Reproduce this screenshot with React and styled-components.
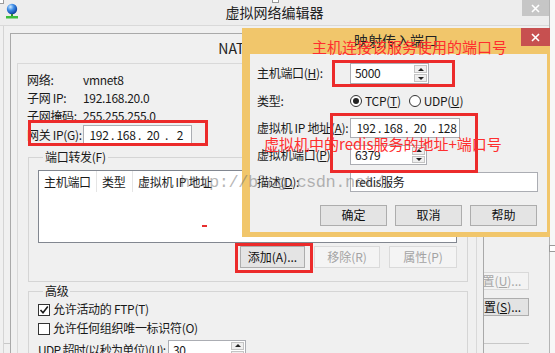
import React from 'react';
import styled, { createGlobalStyle } from 'styled-components';

const GlobalStyle = createGlobalStyle`
  html, body {
    margin: 0;
    padding: 0;
    background: #f7f7f7;
  }
  body {
    font-family: "Noto Sans CJK SC", "Liberation Sans", sans-serif;
    font-size: 12px;
    line-height: 1.2;
    color: #1a1a1a;
  }
`;

const Desktop = styled.div`
  position: relative;
  width: 555px;
  height: 353px;
  overflow: hidden;
  background: #f7f7f7;
  white-space: nowrap;
  letter-spacing: -0.3px;
`;

/* ---------- editor window (back) ---------- */

const EditorWindow = styled.div`
  position: absolute;
  left: 0;
  top: 0;
  width: 549px;
  height: 353px;
  display: flex;
  flex-direction: column;
  background: #f0f0f0;
  border-right: 1px solid #b4b4b4;
`;

const TitleBar = styled.div`
  flex: none;
  height: 25px;
  display: grid;
  grid-template-columns: 1fr auto 1fr;
  align-items: start;
  background: #ededed;
  border-bottom: 1px solid #d9d9d9;
`;

const AppIcon = styled.div`
  padding: 3px 0 0 5px;
  line-height: 0;
`;

const Caption = styled.div`
  font-size: 14px;
  line-height: 25px;
  letter-spacing: 0;
  color: #222;
`;

const CloseButton = styled.div`
  justify-self: end;
  width: ${(p) => p.$w}px;
  height: ${(p) => p.$h}px;
  display: flex;
  align-items: center;
  justify-content: center;
  background: ${(p) => (p.$red ? '#c75050' : '#c6c6c6')};
`;

const EditorBody = styled.div`
  flex: 1;
  display: flex;
  flex-direction: column;
  align-items: flex-end;
  gap: 8px;
  margin-left: 3px;
  padding: 246px 20px 0 0;
  border-left: 1px solid #d4d4d4;
`;

const SideButton = styled.button`
  width: 90px;
  height: 18px;
  padding: 0;
  font: inherit;
  line-height: 16px;
  color: ${(p) => (p.disabled ? '#a6a6a6' : '#111')};
  background: ${(p) => (p.disabled ? '#f3f3f3' : '#e3e3e3')};
  border: 1px solid ${(p) => (p.disabled ? '#d9d9d9' : '#adadad')};
`;

const SideRule = styled.div`
  width: 100%;
  height: 1px;
  margin-top: 19px;
  background: #c8c8c8;
`;

/* ---------- NAT dialog (middle) ---------- */

const NatDialog = styled.div`
  position: absolute;
  left: 10px;
  top: 33px;
  width: 474px;
  height: 340px;
  box-sizing: border-box;
  display: flex;
  flex-direction: column;
  padding: 0 6px;
  background: #f0f0f0;
  border: 1px solid #a9a9a9;
`;

const NatTitle = styled.div`
  height: 29px;
  line-height: 29px;
  text-align: center;
  font-size: 14px;
  letter-spacing: 0;
  color: #222;
`;

const NatBody = styled.div`
  flex: 1;
  border: 1px solid #d9d9d9;
  background: #f0f0f0;
`;

const InfoGrid = styled.div`
  display: grid;
  grid-template-columns: 56px auto;
  grid-template-rows: 18px 18px 18px 20px;
  align-items: center;
  padding: 7px 0 0 9px;
`;

const IpBox = styled.div`
  display: flex;
  align-items: center;
  width: ${(p) => p.$w}px;
  height: 20px;
  box-sizing: border-box;
  padding-left: 5px;
  background: #fff;
  border: 1px solid #abadb3;
`;

const Octet = styled.span`
  width: 20px;
  text-align: center;
`;

const IpDot = styled.span`
  width: 7px;
  text-align: center;
`;

const Group = styled.fieldset`
  min-width: 0;
  margin: ${(p) => p.$top}px 8px 0 10px;
  padding: ${(p) => p.$pad}px 10px ${(p) => p.$bottom}px 9px;
  border: 1px solid #d5d5d5;
`;

const Legend = styled.legend`
  margin-left: 5px;
  padding: 0 2px;
  line-height: 14px;
`;

const ListBox = styled.div`
  height: 73px;
  box-sizing: border-box;
  background: #fff;
  border: 1px solid #828790;
`;

const ListHeader = styled.div`
  display: flex;
  height: 21px;
`;

const HeaderCell = styled.div`
  width: ${(p) => p.$w}px;
  box-sizing: border-box;
  padding-left: 5px;
  line-height: 21px;
  border-right: 1px solid #e5e5e5;
`;

const ButtonRow = styled.div`
  display: flex;
  justify-content: flex-end;
  gap: ${(p) => p.$gap}px;
  margin-top: ${(p) => p.$top}px;
  padding-right: ${(p) => p.$right || 0}px;
`;

const Button = styled.button`
  width: ${(p) => p.$w}px;
  height: ${(p) => p.$h || 21}px;
  padding: 0;
  font: inherit;
  color: ${(p) => (p.disabled ? '#a3a3a3' : '#111')};
  background: ${(p) => (p.disabled ? '#f4f4f4' : '#e4e4e4')};
  border: 1px solid ${(p) => (p.disabled ? '#dadada' : '#adadad')};
`;

const CheckRow = styled.label`
  display: flex;
  align-items: center;
  gap: 3px;
  height: 19px;
`;

const CheckBox = styled.span`
  width: 12px;
  height: 12px;
  box-sizing: border-box;
  display: flex;
  align-items: center;
  justify-content: center;
  background: #fff;
  border: 1px solid #333;
`;

const FieldRow = styled.div`
  display: flex;
  align-items: center;
  margin-top: 2px;
`;

const FieldLabel = styled.span`
  flex: none;
  width: 130px;
  letter-spacing: -0.7px;
`;

/* ---------- port mapping dialog (front) ---------- */

const MapDialog = styled.div`
  position: absolute;
  left: 242px;
  top: 28px;
  width: 308px;
  height: 209px;
  box-sizing: border-box;
  display: flex;
  flex-direction: column;
  padding-bottom: 5px;
  background: #f1c66b;
`;

const MapTitleBar = styled.div`
  flex: none;
  height: 26px;
  display: grid;
  grid-template-columns: 1fr auto 1fr;
  align-items: start;
`;

const MapCaption = styled.div`
  font-size: 14px;
  line-height: 24px;
  letter-spacing: 0;
  color: #222;
`;

const MapContent = styled.div`
  flex: 1;
  margin: 0 3px 0 8px;
  background: #f0f0f0;
`;

const Form = styled.div`
  display: grid;
  grid-template-columns: 93px auto;
  grid-template-rows: 21px 20px 20px 20px 20px;
  row-gap: 7px;
  align-items: center;
  padding: 9px 10px 0 7px;
`;

const Key = styled.span`
  text-decoration: underline;
  text-underline-offset: 1px;
`;

const SpinBox = styled.div`
  display: flex;
  width: ${(p) => p.$w}px;
  height: ${(p) => p.$h}px;
  box-sizing: border-box;
  background: #fff;
  border: 1px solid #abadb3;
`;

const SpinText = styled.span`
  flex: 1;
  padding-left: 4px;
  align-self: center;
`;

const SpinArrows = styled.div`
  display: flex;
  flex-direction: column;
  gap: 1px;
  width: 13px;
  padding: 1px;
`;

const Arrow = styled.span`
  flex: 1;
  display: flex;
  align-items: center;
  justify-content: center;
  background: #efefef;
  border: 1px solid #c4c4c4;

  &::after {
    content: '';
    border-left: 3px solid transparent;
    border-right: 3px solid transparent;
    ${(p) => (p.$down ? 'border-top: 3px solid #222;' : 'border-bottom: 3px solid #222;')}
  }
`;

const RadioGroup = styled.div`
  display: flex;
  align-items: center;
  gap: 8px;
`;

const RadioItem = styled.label`
  display: flex;
  align-items: center;
  gap: 3px;
`;

const Radio = styled.span`
  width: 12px;
  height: 12px;
  box-sizing: border-box;
  border-radius: 50%;
  border: 1px solid #333;
  background: #fff;
  display: flex;
  align-items: center;
  justify-content: center;

  &::after {
    content: '';
    width: 6px;
    height: 6px;
    border-radius: 50%;
    background: ${(p) => (p.$on ? '#222' : 'transparent')};
  }
`;

const TextBox = styled.div`
  width: ${(p) => p.$w}px;
  height: 20px;
  box-sizing: border-box;
  padding-left: 4px;
  line-height: 18px;
  background: #fff;
  border: 1px solid #abadb3;
`;

/* ---------- annotations over the screenshot ---------- */

const RedBox = styled.div`
  position: absolute;
  left: ${(p) => p.$x}px;
  top: ${(p) => p.$y}px;
  width: ${(p) => p.$w}px;
  height: ${(p) => p.$h}px;
  box-sizing: border-box;
  border: 3px solid #ec2b2b;
`;

const RedNote = styled.div`
  position: absolute;
  left: ${(p) => p.$x}px;
  top: ${(p) => p.$y}px;
  font-size: 15px;
  line-height: 16px;
  letter-spacing: 0;
  color: #ff2e2e;
`;

const Watermark = styled.div`
  position: absolute;
  left: 180px;
  top: 173px;
  font-family: "Liberation Mono", monospace;
  font-size: 17px;
  letter-spacing: -0.5px;
  color: rgba(110, 110, 110, 0.5);
`;

const RedDash = styled.div`
  position: absolute;
  left: 202px;
  top: 225px;
  width: 5px;
  height: 2px;
  background: #e62e2e;
`;

const Handle = styled.div`
  position: absolute;
  left: ${(p) => p.$x}px;
  top: ${(p) => p.$y}px;
  width: 5px;
  height: 5px;
  background: #fff;
  border: 1px solid #9a9a9a;
`;

const GlobeIcon = () => (
  <svg width="14" height="16" viewBox="0 0 14 16">
    <defs>
      <radialGradient id="globe" cx="35%" cy="30%" r="75%">
        <stop offset="0" stopColor="#cfeaff" />
        <stop offset="0.45" stopColor="#3a8ae6" />
        <stop offset="1" stopColor="#0b3a98" />
      </radialGradient>
    </defs>
    <circle cx="7" cy="6" r="5.2" fill="url(#globe)" />
    <rect x="6" y="11" width="2" height="2" fill="#2f8f2f" />
    <rect x="1" y="13" width="12" height="2.5" fill="#3cbd3c" />
  </svg>
);

const CrossIcon = () => (
  <svg width="9" height="9" viewBox="0 0 9 9">
    <path d="M1 1 L8 8 M8 1 L1 8" stroke="#fff" strokeWidth="1.6" />
  </svg>
);

const TickIcon = () => (
  <svg width="10" height="10" viewBox="0 0 10 10">
    <path d="M1.5 5 L4 7.8 L8.8 1.5" stroke="#1a1a1a" strokeWidth="1.6" fill="none" />
  </svg>
);

const IpAddress = ({ parts, width }) => (
  <IpBox $w={width}>
    {parts.map((part, i) => (
      <React.Fragment key={i}>
        {i > 0 && <IpDot>.</IpDot>}
        <Octet>{part}</Octet>
      </React.Fragment>
    ))}
  </IpBox>
);

const Spinner = ({ value, width, height }) => (
  <SpinBox $w={width} $h={height}>
    <SpinText>{value}</SpinText>
    <SpinArrows>
      <Arrow />
      <Arrow $down />
    </SpinArrows>
  </SpinBox>
);

const App = () => (
  <>
    <GlobalStyle />
    <Desktop>
      <EditorWindow>
        <TitleBar>
          <AppIcon>
            <GlobeIcon />
          </AppIcon>
          <Caption>虚拟网络编辑器</Caption>
          <CloseButton $w={27} $h={16}>
            <CrossIcon />
          </CloseButton>
        </TitleBar>
        <EditorBody>
          <SideButton disabled>
            还原设置(<Key>U</Key>)...
          </SideButton>
          <SideButton>
            NAT 设置(<Key>S</Key>)...
          </SideButton>
          <SideRule />
        </EditorBody>
      </EditorWindow>

      <NatDialog>
        <NatTitle>NAT 设置</NatTitle>
        <NatBody>
          <InfoGrid>
            <span>网络:</span>
            <span>vmnet8</span>
            <span>子网 IP:</span>
            <span>192.168.20.0</span>
            <span>子网掩码:</span>
            <span>255.255.255.0</span>
            <span>网关 IP(G):</span>
            <IpAddress parts={['192', '168', '20', '2']} width={109} />
          </InfoGrid>

          <Group $top={5} $pad={6} $bottom={13}>
            <Legend>端口转发(F)</Legend>
            <ListBox>
              <ListHeader>
                <HeaderCell $w={58}>主机端口</HeaderCell>
                <HeaderCell $w={36}>类型</HeaderCell>
                <HeaderCell $w={112}>虚拟机 IP 地址</HeaderCell>
              </ListHeader>
            </ListBox>
            <ButtonRow $gap={9} $top={3}>
              <Button $w={65} $h={22}>添加(A)...</Button>
              <Button $w={66} $h={22} disabled>移除(R)</Button>
              <Button $w={68} $h={22} disabled>属性(P)</Button>
            </ButtonRow>
          </Group>

          <Group $top={2} $pad={2} $bottom={10}>
            <Legend>高级</Legend>
            <CheckRow>
              <CheckBox>
                <TickIcon />
              </CheckBox>
              <span>允许活动的 FTP(T)</span>
            </CheckRow>
            <CheckRow>
              <CheckBox />
              <span>允许任何组织唯一标识符(O)</span>
            </CheckRow>
            <FieldRow>
              <FieldLabel>UDP 超时(以秒为单位)(U):</FieldLabel>
              <Spinner value="30" width={78} height={20} />
            </FieldRow>
          </Group>
        </NatBody>
      </NatDialog>

      <MapDialog>
        <MapTitleBar>
          <span />
          <MapCaption>映射传入端口</MapCaption>
          <CloseButton $red $w={29} $h={18}>
            <CrossIcon />
          </CloseButton>
        </MapTitleBar>
        <MapContent>
          <Form>
            <span>
              主机端口(<Key>H</Key>):
            </span>
            <Spinner value="5000" width={79} height={21} />

            <span>类型:</span>
            <RadioGroup>
              <RadioItem>
                <Radio $on />
                <span>
                  TCP(<Key>T</Key>)
                </span>
              </RadioItem>
              <RadioItem>
                <Radio />
                <span>
                  UDP(<Key>U</Key>)
                </span>
              </RadioItem>
            </RadioGroup>

            <span>
              虚拟机 IP 地址(<Key>A</Key>):
            </span>
            <IpAddress parts={['192', '168', '20', '128']} width={110} />

            <span>
              虚拟机端口(<Key>P</Key>):
            </span>
            <Spinner value="6379" width={77} height={20} />

            <span>
              描述(<Key>D</Key>):
            </span>
            <TextBox $w={188}>redis服务</TextBox>
          </Form>
          <ButtonRow $gap={8} $top={13} $right={10}>
            <Button $w={67}>确定</Button>
            <Button $w={67}>取消</Button>
            <Button $w={67}>帮助</Button>
          </ButtonRow>
        </MapContent>
      </MapDialog>

      <Watermark>http://blog.csdn.net/</Watermark>
      <RedDash />

      <RedBox $x={28} $y={120} $w={180} $h={26} />
      <RedBox $x={332} $y={60} $w={123} $h={27} />
      <RedBox $x={330} $y={113} $w={148} $h={60} />
      <RedBox $x={235} $y={243} $w={78} $h={30} />

      <RedNote $x={312} $y={39}>主机连接该服务使用的端口号</RedNote>
      <RedNote $x={264} $y={136}>虚拟机中的redis服务的地址+端口号</RedNote>

      <Handle $x={-3} $y={-3} />
      <Handle $x={272} $y={-4} />
      <Handle $x={549} $y={245} />
    </Desktop>
  </>
);

export default App;
